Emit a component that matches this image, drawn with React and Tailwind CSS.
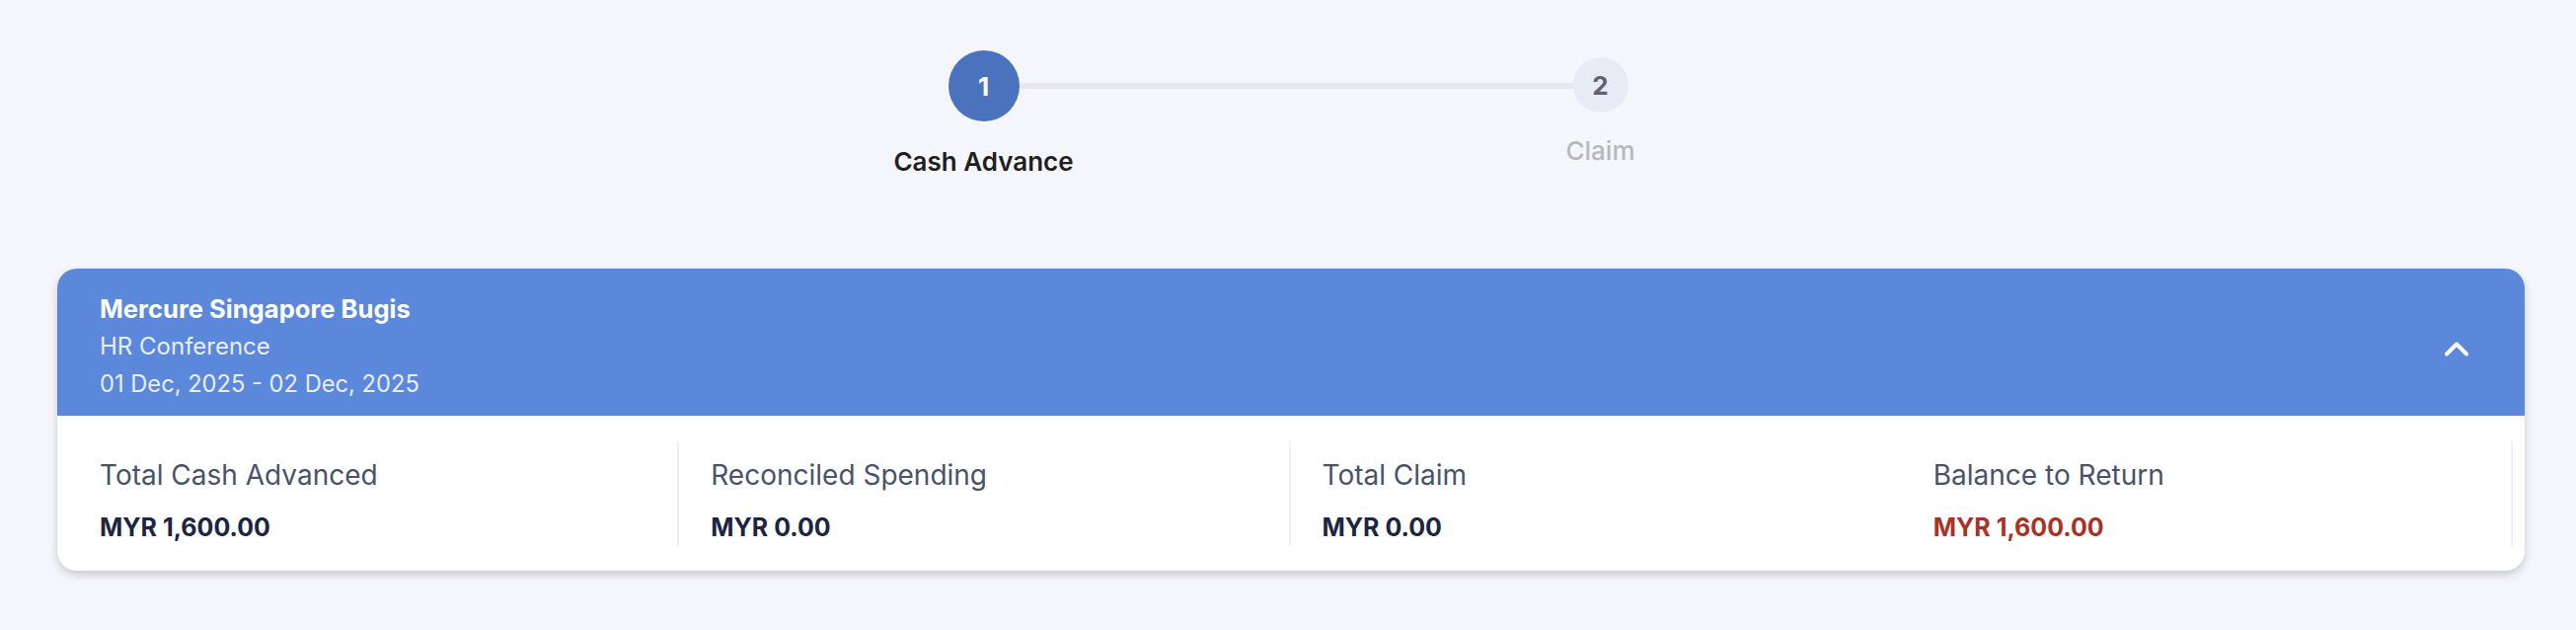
const summary = [
  { label: 'Total Cash Advanced', value: 'MYR 1,600.00', border: true },
  { label: 'Reconciled Spending', value: 'MYR 0.00', border: true },
  { label: 'Total Claim', value: 'MYR 0.00', border: false },
  { label: 'Balance to Return', value: 'MYR 1,600.00', border: true, danger: true },
]

const Stepper = () => (
  <div className="flex items-start w-[689px] mx-auto">
    {/* Step 1 */}
    <div className="w-[72px] flex flex-col items-center">
      <div className="w-[72px] h-[72px] rounded-full bg-[#4a72bd] flex items-center justify-center text-white text-[26px] font-bold">
        1
      </div>
      <div className="w-[72px] flex justify-center mt-[25px]">
        <span className="whitespace-nowrap text-[26px] leading-[32px] font-semibold text-[#1f1f1f]">
          Cash Advance
        </span>
      </div>
    </div>

    <div className="flex-1 h-[6px] mt-[33px] bg-[#e6e7ef]" />

    {/* Step 2 */}
    <div className="w-[56px] flex flex-col items-center mt-[7px]">
      <div className="w-[56px] h-[56px] rounded-full bg-[#e6ebf5] flex items-center justify-center text-[#5f6470] text-[26px] font-bold">
        2
      </div>
      <div className="w-[56px] flex justify-center mt-[23px]">
        <span className="whitespace-nowrap text-[26px] leading-[32px] font-medium text-[#b8b8b8]">
          Claim
        </span>
      </div>
    </div>
  </div>
)

export default function App() {
  return (
    <div className="min-h-[638px] bg-[#f5f6fb] font-['Inter',sans-serif] pt-[51px]">
      <Stepper />

      <div className="pl-[58px] pr-[52px] mt-[92px]">
        <div className="bg-white rounded-[20px] overflow-hidden shadow-[0_4px_8px_rgba(0,0,0,0.18)]">
          {/* Header */}
          <div className="bg-[#5b88db] flex items-center justify-between pl-[43px] pr-[57px] pt-[22px] pb-[13px]">
            <div>
              <div className="text-[25.6px] leading-[38px] font-bold text-white">Mercure Singapore Bugis</div>
              <div className="text-[24px] leading-[38px] text-[#e8eefb]">HR Conference</div>
              <div className="text-[23.7px] leading-[38px] text-[#e8eefb]">01 Dec, 2025 - 02 Dec, 2025</div>
            </div>
            <svg width="24" height="16" viewBox="0 0 24 16" fill="none" className="mt-[4px]">
              <polyline points="2,13.5 12,3.5 22,13.5" stroke="white" strokeWidth="4" strokeLinecap="round" strokeLinejoin="round" />
            </svg>
          </div>

          {/* Summary */}
          <div className="grid grid-cols-4 pl-[11px] pr-[12px] pt-[26px] pb-[25px]">
            {summary.map((item) => (
              <div
                key={item.label}
                className={`pl-[32px] pt-[16px] pb-[3px] ${item.border ? 'border-r-2 border-[#eef0f3]' : ''}`}
              >
                <div className="text-[28px] leading-[36px] text-[#49526a]">{item.label}</div>
                <div className={`mt-[19px] text-[25px] leading-[32px] font-bold ${item.danger ? 'text-[#a93226]' : 'text-[#1c2541]'}`}>
                  {item.value}
                </div>
              </div>
            ))}
          </div>
        </div>
      </div>
    </div>
  )
}
